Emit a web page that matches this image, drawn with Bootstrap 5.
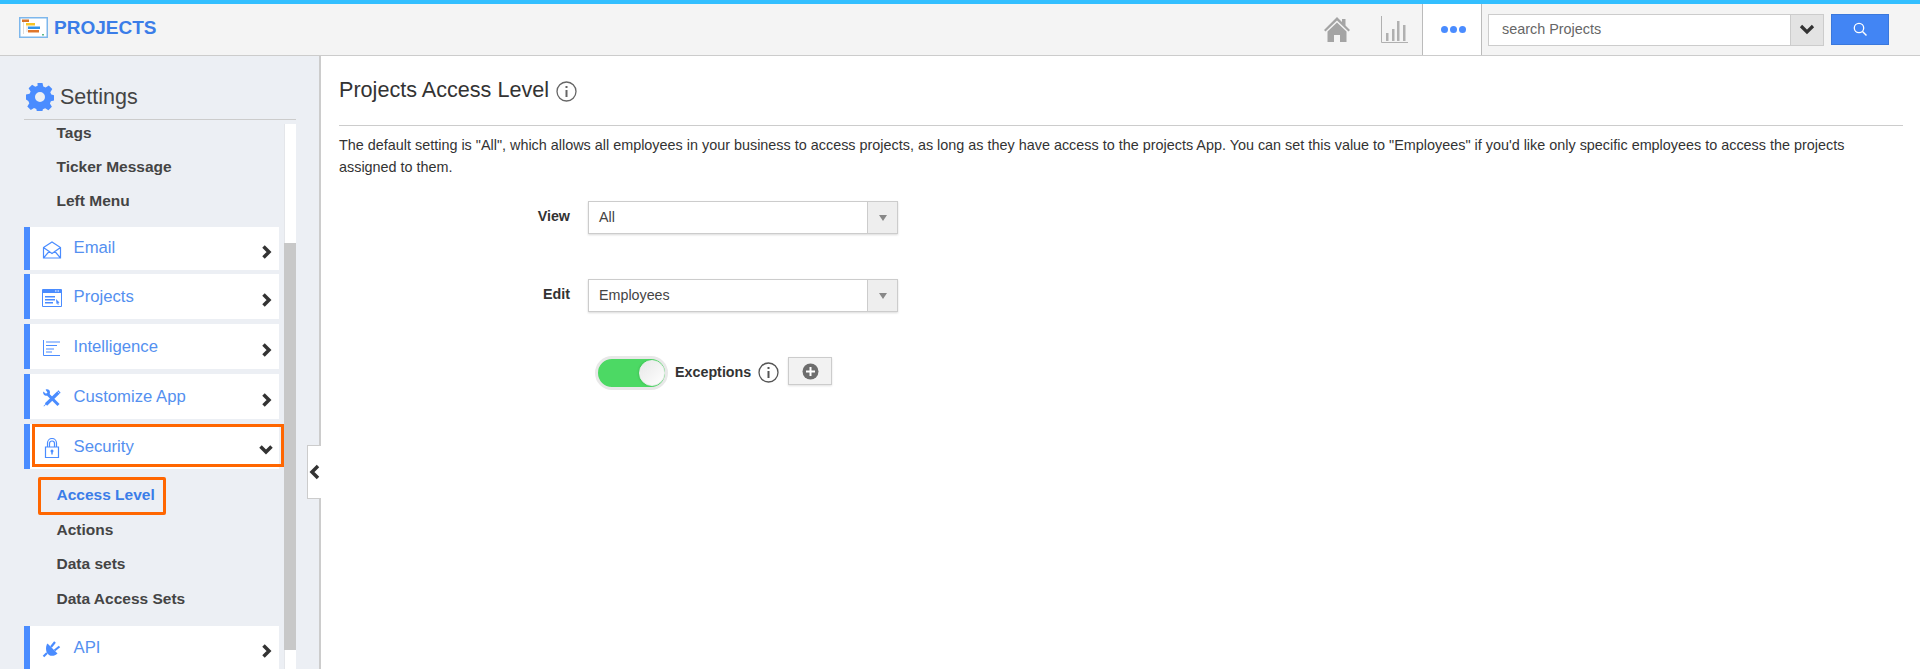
<!DOCTYPE html>
<html lang="en">
<head>
<meta charset="utf-8">
<title>Projects Access Level</title>
<link href="https://cdn.jsdelivr.net/npm/bootstrap@5.3.0/dist/css/bootstrap.min.css" rel="stylesheet">
<style>
html,body{height:100%;overflow:hidden}
body{font-family:"Liberation Sans",Arial,sans-serif;font-size:14.3px;color:#333;background:#fff}
.app-top{height:56px;background:#f4f4f4;border-top:4px solid #33bfff;border-bottom:1px solid #ccc}
.app-brand{padding-left:19px;gap:6px;color:#3b7de8;font-size:19px;font-weight:700;line-height:1;padding-bottom:4px}
.top-home{margin-right:31px}
.top-chart{margin-right:14px}
.top-more{width:60px;height:100%;background:#fff;border-left:1px solid #bbb;border-right:1px solid #bbb;gap:2px;padding-left:2px}
.top-more i{width:7px;height:7px;border-radius:50%;background:#4a8cff;display:block}
.top-search{margin:0 31px 0 6px;height:33px}
.search-field{width:336px;height:32px;border:1px solid #ccc;background:#fff;font-size:14.4px;color:#666;padding-left:13px}
.search-field span{flex:1}
.search-drop{width:33px;height:100%;background:#e3e3e3;border-left:1px solid #ccc}
.search-go{width:58px;height:31px;margin-left:7px;background:#4285f4;border:1px solid #3a78dc;border-radius:0;padding:0}
.app-body{height:613px}
.side{width:321px;background:#eceff4;border-right:2px solid #ccc;padding:27px 24px 0}
.side-head{height:37px;border-bottom:1px solid #ccc;font-size:21.5px;color:#444;gap:6px;width:272px;padding-left:2px;padding-bottom:8px;flex:none}
.side-scroll{height:549px;position:relative;width:272px}
.rail{width:12px;height:100%;background:#fff;margin-top:4px;flex:none;position:relative;border-left:1px solid #e4e6ea}
.rail-thumb{height:407px;margin-top:119px;background:#c8c8c8;margin-left:-1px}
.menu-col{width:255px;margin-right:5px;flex:none}
.sub{height:34.5px;padding-left:32.5px;font-size:15.5px;font-weight:700;color:#444;display:flex;align-items:center}
.sub-first{height:29px;align-items:flex-start;padding-top:1px}
.sub-last{margin-bottom:9px}
.sub-on{color:#3b7de8}
.tile{background:#fff;border-left:6px solid #4a8cff;font-size:16.7px;color:#5490f0;position:relative;margin-bottom:5px;height:45px;padding-left:12px}
.tile-short{height:43px;margin-bottom:4px}
.tile-flush{margin-bottom:0}
.tile-ico{width:20px;flex:none;margin-right:11.5px;position:relative;top:1px}
.tile-name{flex:1}
.tile-short .tile-name{position:relative;top:-1px}
.tile-chev{margin-right:6px;position:relative;top:3px}
.mark-sec{position:absolute;left:2px;top:0;width:252px;height:43px;border:3px solid #ff6600;pointer-events:none}
.mark-sub{position:absolute;left:14px;top:8px;width:128px;height:38px;border:3px solid #ff6600;border-radius:2px;pointer-events:none}
.sub-wrap{position:relative;padding-top:8.500px;padding-bottom:10px}
.pull{position:absolute;left:307px;top:389px;width:14px;height:54px;background:#fff;border:1px solid #ccc;border-right:0}
.pane{padding:0 17px 0 18px;min-width:0}
.pane-title{font-size:21.6px;font-weight:400;color:#333;margin:21px 0 0;height:49px;gap:7px;line-height:26px;border-bottom:1px solid #ccc}
.pane-desc{font-size:14.4px;line-height:21.5px;margin:9px 0 0;color:#333}
.f-row{height:33px;margin-bottom:45px}
.f-row-first{margin-top:23px}
.f-row-second{margin-bottom:44px}
.f-label{width:231px;text-align:right;font-weight:700;font-size:14.3px;margin-right:18px;position:relative;top:-1px}
.f-select{width:310px;height:33px;border:1px solid #ccc;box-shadow:0 1px 2px rgba(0,0,0,.15);font-size:14.3px;padding-left:10px;color:#444}
.f-select span{flex:1}
.f-caret{width:30px;height:31px;background:#eee;border-left:1px solid #ccc}
.f-caret i{display:block;border:4px solid transparent;border-top:6px solid #888;border-bottom:0}
.sw-line{padding-left:256px}
.sw{width:73px;height:34px;border-radius:17px;background:#4cd964;border:3px solid #e8e8e8;position:relative;flex:none}
.sw i{position:absolute;right:0;top:1px;width:26px;height:26px;border-radius:50%;background:linear-gradient(135deg,#e8e8e8,#fff);border:1px solid #eee;display:block;box-shadow:-1px 0 2px rgba(0,0,0,.1)}
.sw-text{font-weight:700;font-size:14.3px;margin:0 7px}
.sw-info{position:relative;top:-1px}
.plus-btn{width:44px;height:28px;background:#f2f2f2;border:1px solid #ccc;box-shadow:0 1px 2px rgba(0,0,0,.12);margin-left:9px;padding:0;border-radius:0;position:relative;top:-2px}
</style>
</head>
<body>
<header class="app-top d-flex align-items-center">
  <div class="app-brand d-flex align-items-center">
    <svg width="29" height="21" viewBox="0 0 29 21"><rect x=".75" y=".75" width="27.500" height="19.500" fill="#fff" stroke="#7db7ec" stroke-width="1.500"/><path d="M3 2.500h7v2.500H3z" fill="#d9742a"/><path d="M7 6h9v2.500H7z" fill="#f7c525"/><path d="M9 9.500h12v2.500H9z" fill="#2f93ea"/><path d="M9 13h11v2.500H9z" fill="#e0762a"/><path d="M4.500 5v12M8 9v6" stroke="#ddd" fill="none"/><path d="M23 17h2v1.500h-2z" fill="#5cb98a"/></svg>
    <span>PROJECTS</span>
  </div>
  <div class="ms-auto d-flex align-items-center h-100">
    <svg class="top-home" width="26" height="27" viewBox="0 0 26 27"><path d="M13 1 0 14l1.500 1.500L13 4.500 24.500 15.500 26 14l-4.500-4.500V3h-3.500v3z" fill="#a4a4a4"/><path d="M3.500 15.500V26H10v-7h6v7h6.500V15.500L13 6.500z" fill="#a4a4a4"/></svg>
    <svg class="top-chart" width="27" height="28" viewBox="0 0 27 28"><path d="M.5 0v26.500H27" stroke="#b0b0b0" fill="none"/><path d="M5 17h2.500v8H5zM11 13h2.500v12H11zM16 5h2.500v20H16zM22 9h2.500v16H22z" fill="#b0b0b0"/></svg>
    <div class="top-more d-flex align-items-center justify-content-center"><i></i><i></i><i></i></div>
    <div class="top-search d-flex align-items-center">
      <div class="search-field d-flex align-items-center"><span>search Projects</span>
        <div class="search-drop d-flex align-items-center justify-content-center"><svg width="16" height="11" viewBox="0 0 16 11"><path d="M2 2l6 6 6-6" fill="none" stroke="#333" stroke-width="3.200"/></svg></div>
      </div>
      <button class="btn search-go d-flex align-items-center justify-content-center" aria-label="Search"><svg width="15" height="15" viewBox="0 0 15 15"><circle cx="6" cy="6" r="4.700" fill="none" stroke="#fff" stroke-width="1.300"/><path d="M9.500 9.500l4 4" stroke="#fff" stroke-width="1.500"/></svg></button>
    </div>
  </div>
</header>
<div class="app-body d-flex position-relative">
  <aside class="side d-flex flex-column overflow-hidden flex-shrink-0">
    <div class="side-head d-flex align-items-center">
      <svg width="28" height="28" viewBox="0 0 28 28"><path fill="#4a8cff" fill-rule="evenodd" d="M11.500 0h5l.8 3.600 2.300 1 3.200-2 3.500 3.500-2 3.200 1 2.300 3.200.8v5l-3.600.8-1 2.300 2 3.200-3.500 3.500-3.200-2-2.300 1-.8 3.300h-5l-.8-3.600-2.300-1-3.200 2-3.500-3.500 2-3.200-1-2.300L0 16.500v-5l3.600-.8 1-2.300-2-3.200 3.500-3.500 3.200 2 2.300-1zM14 9a5 5 0 1 0 0 10 5 5 0 0 0 0-10z"/></svg>
      <span>Settings</span>
    </div>
    <div class="side-scroll d-flex">
      <nav class="menu-col">
        <div class="sub sub-first">Tags</div>
        <div class="sub">Ticker Message</div>
        <div class="sub sub-last">Left Menu</div>
        <div class="tile tile-short d-flex align-items-center"><svg class="tile-ico" height="18" viewBox="0 0 20 18"><path d="M1.500 6.500 10 1l8.500 5.500V17h-17zM1.500 6.500l8.500 6 8.500-6M1.500 17l6-7M18.500 17l-6-7" fill="none" stroke="#4a8cff" stroke-width="1.200"/></svg><span class="tile-name">Email</span><svg class="tile-chev" width="12" height="14" viewBox="0 0 12 14"><path d="M2.500 1.500 8 7l-5.500 5.500" fill="none" stroke="#333" stroke-width="3.500"/></svg></div>
        <div class="tile d-flex align-items-center"><svg class="tile-ico" height="18" viewBox="0 0 20 18"><path d="M.5.500h19v17H.5z" fill="none" stroke="#4a8cff"/><path d="M1 1h18v3H1zM3 7h10v1.500H3zM3 10h10v1.500H3zM3 13h8v1.500H3zM14 10l3.500 3.500-1.200.5.500 1.500-1 .3-.6-1.500-.7.7z" fill="#4a8cff"/><path d="M13 2h1.500M15.500 2H17" stroke="#fff"/></svg><span class="tile-name">Projects</span><svg class="tile-chev" width="12" height="14" viewBox="0 0 12 14"><path d="M2.500 1.500 8 7l-5.500 5.500" fill="none" stroke="#333" stroke-width="3.500"/></svg></div>
        <div class="tile d-flex align-items-center"><svg class="tile-ico" height="18" viewBox="0 0 20 18"><path d="M1.500 1v15.500H18M4 3h14M4 6.500h11M4 10h8M4 13h6" fill="none" stroke="#4a8cff"/></svg><span class="tile-name">Intelligence</span><svg class="tile-chev" width="12" height="14" viewBox="0 0 12 14"><path d="M2.500 1.500 8 7l-5.500 5.500" fill="none" stroke="#333" stroke-width="3.500"/></svg></div>
        <div class="tile d-flex align-items-center"><svg class="tile-ico" height="18" viewBox="0 0 20 18"><path d="M6 5.500 16.500 16" stroke="#4a8cff" stroke-width="3" fill="none"/><path d="M1.300 2.500 4 4.800l1.500-1.300L3.600.7C5.700-.3 8 1 8 3.500c0 2.500-2.500 4-5 3C1.500 5.800.8 4.200 1.300 2.500z" fill="#4a8cff"/><path d="M17.500 2.500 4 15.500" stroke="#4a8cff" stroke-width="3.200" fill="none"/><path d="M5.300 14.200 2 17.500l-.5-.5 3-3z" fill="#4a8cff"/><path d="M15.500 2.500l2 2" stroke="#fff" stroke-width=".7"/></svg><span class="tile-name">Customize App</span><svg class="tile-chev" width="12" height="14" viewBox="0 0 12 14"><path d="M2.500 1.500 8 7l-5.500 5.500" fill="none" stroke="#333" stroke-width="3.500"/></svg></div>
        <div class="tile tile-flush d-flex align-items-center"><svg class="tile-ico" height="20" viewBox="0 0 20 20"><path d="M5.500 9V5a4.500 4.500 0 0 1 9 0v4M7.500 9V5.500a2.500 2.500 0 0 1 5 0V9M3.500 9h13v10.500h-13z" fill="none" stroke="#4a8cff" stroke-width="1.200"/><circle cx="10" cy="13" r="1.500" fill="#4a8cff"/><path d="M9.300 13h1.400v3.500H9.300z" fill="#4a8cff"/></svg><span class="tile-name">Security</span><svg class="tile-chev" width="14" height="12" viewBox="0 0 14 12"><path d="M1.500 2.500 7 8l5.500-5.500" fill="none" stroke="#333" stroke-width="3.500"/></svg><div class="mark-sec"></div></div>
        <div class="sub-wrap">
          <div class="sub sub-on">Access Level</div>
          <div class="sub">Actions</div>
          <div class="sub">Data sets</div>
          <div class="sub">Data Access Sets</div>
          <div class="mark-sub"></div>
        </div>
        <div class="tile d-flex align-items-center"><svg class="tile-ico" height="18" viewBox="0 0 20 18"><path d="M1.500 16.500 5 13" stroke="#4a8cff" stroke-width="2.200" fill="none"/><path d="M5.500 3.500l10 10c-2.500 2.500-6 3-8.500 1.500L5.500 13.500C3.500 11 3.500 6 5.500 3.500z" fill="#4a8cff"/><path d="M9 7l4-5M12.500 10.500l5-4" stroke="#4a8cff" stroke-width="2.200" fill="none"/></svg><span class="tile-name">API</span><svg class="tile-chev" width="12" height="14" viewBox="0 0 12 14"><path d="M2.500 1.500 8 7l-5.500 5.500" fill="none" stroke="#333" stroke-width="3.500"/></svg></div>
      </nav>
      <div class="rail"><div class="rail-thumb"></div></div>
    </div>
  </aside>
  <button class="btn pull p-0 rounded-0" aria-label="Collapse"><svg width="12" height="16" viewBox="0 0 12 16" class="d-block"><path d="M10 2 4 8l6 6" fill="none" stroke="#333" stroke-width="3.500"/></svg></button>
  <main class="pane flex-grow-1">
    <h1 class="pane-title d-flex align-items-start">Projects Access Level <svg width="21" height="21" viewBox="0 0 21 21" class="mt-1"><circle cx="10.500" cy="10.500" r="9.500" fill="none" stroke="#666" stroke-width="1.300"/><path d="M9.500 5h2v2h-2zM9.500 9h2v7h-2z" fill="#666"/></svg></h1>
    <p class="pane-desc">The default setting is "All", which allows all employees in your business to access projects, as long as they have access to the projects App. You can set this value to "Employees" if you'd like only specific employees to access the projects assigned to them.</p>
    <div class="f-row f-row-first d-flex align-items-center"><div class="f-label">View</div><div class="f-select d-flex align-items-center"><span>All</span><div class="f-caret d-flex align-items-center justify-content-center"><i></i></div></div></div>
    <div class="f-row f-row-second d-flex align-items-center"><div class="f-label">Edit</div><div class="f-select d-flex align-items-center"><span>Employees</span><div class="f-caret d-flex align-items-center justify-content-center"><i></i></div></div></div>
    <div class="sw-line d-flex align-items-center"><div class="sw"><i></i></div><div class="sw-text">Exceptions</div><svg class="sw-info" width="21" height="21" viewBox="0 0 21 21"><circle cx="10.500" cy="10.500" r="9.500" fill="none" stroke="#555" stroke-width="1.300"/><path d="M9.500 5h2v2h-2zM9.500 9h2v7h-2z" fill="#555"/></svg><button class="btn plus-btn d-flex align-items-center justify-content-center" aria-label="Add"><svg width="17" height="17" viewBox="0 0 17 17"><circle cx="8.500" cy="8.500" r="8" fill="#6d6d6d"/><path d="M4 8.500h9M8.500 4v9" stroke="#fff" stroke-width="2"/></svg></button></div>
  </main>
</div>
<script src="https://cdn.jsdelivr.net/npm/bootstrap@5.3.0/dist/js/bootstrap.bundle.min.js"></script>
</body>
</html>
